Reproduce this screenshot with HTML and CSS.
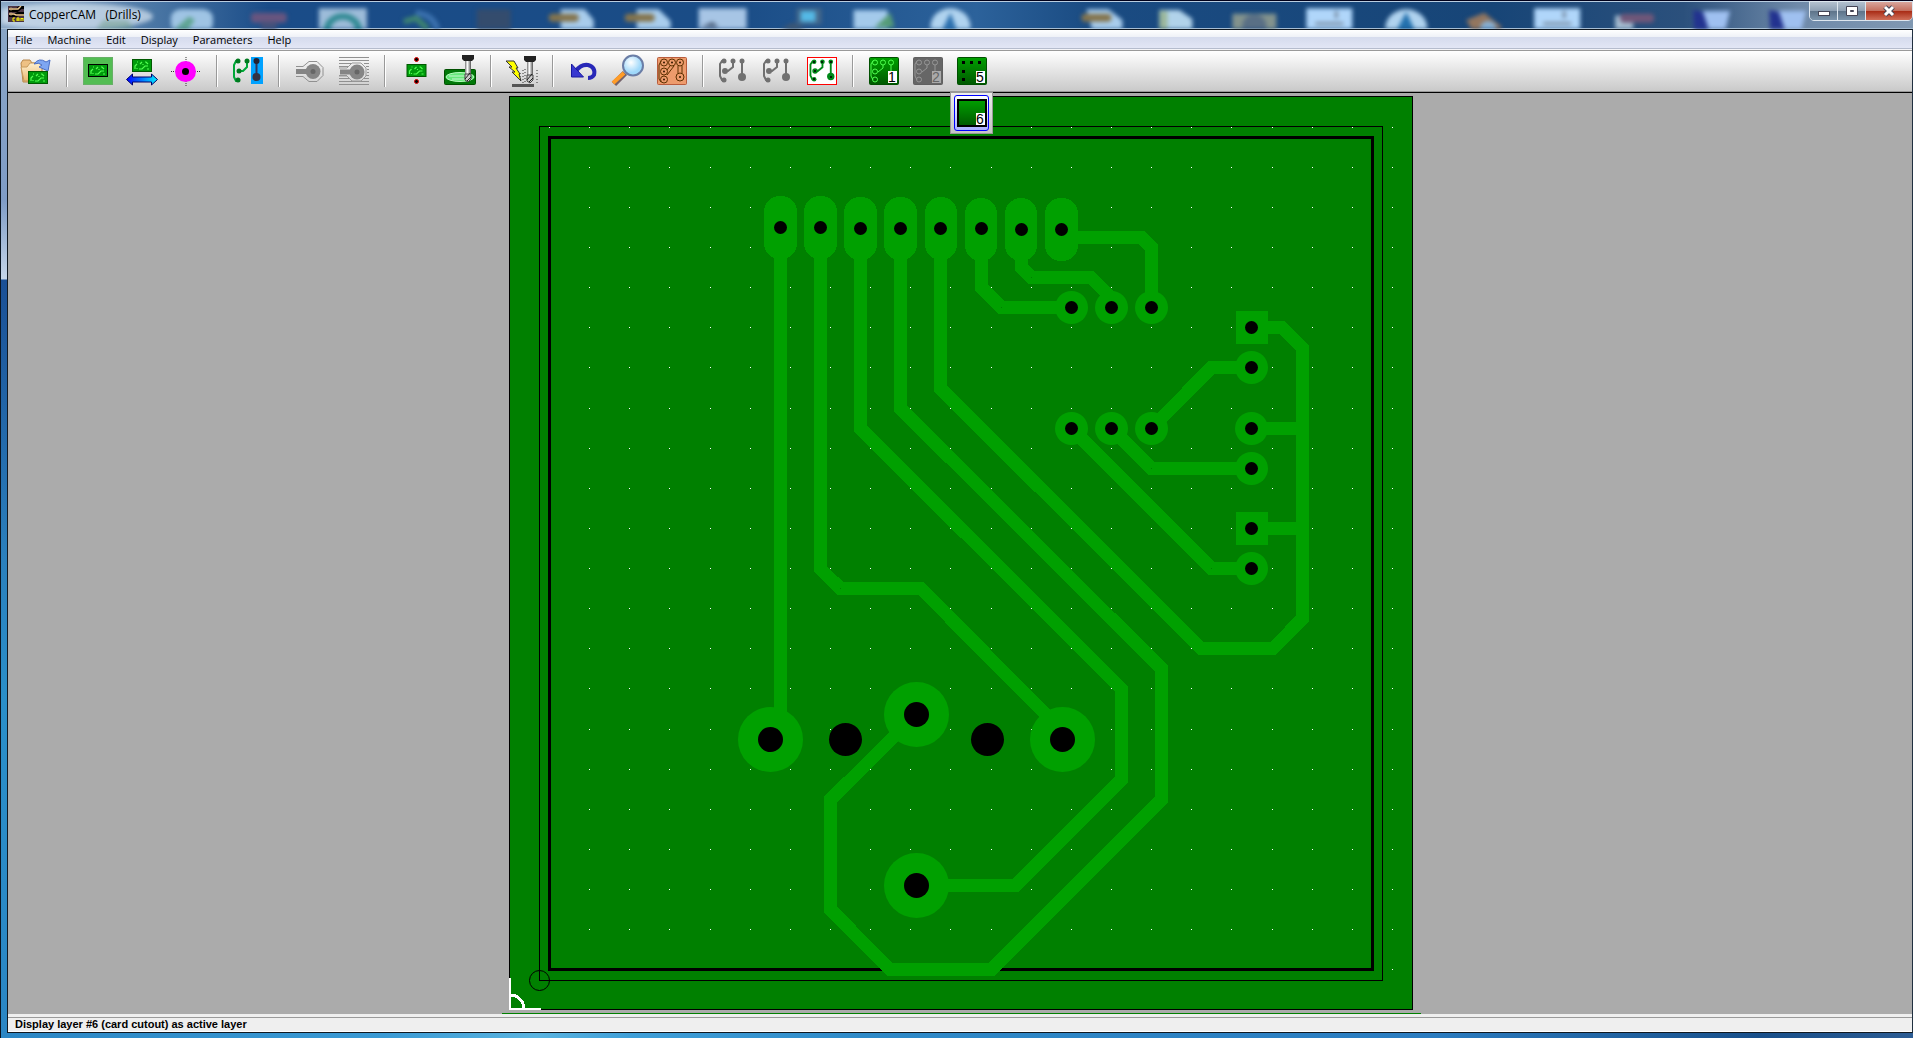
FILE: index.html
```html
<!DOCTYPE html>
<html lang="en">
<head>
    <meta charset="UTF-8">
    <meta name="viewport" content="width=device-width, initial-scale=1.0">
    <title>CopperCAM (Drills)</title>
    <link rel="stylesheet" href="styles.css">
</head>
<body>

    <!-- Shared shapes -->
    <svg class="defs" width="0" height="0" aria-hidden="true">
        <defs>
            <linearGradient id="layerGreen" x1="0" y1="0" x2="0" y2="1">
                <stop offset="0" stop-color="#00a000"/><stop offset="1" stop-color="#005800"/>
            </linearGradient>
            <linearGradient id="arrowBlue"><stop offset="0" stop-color="#0000ff"/><stop offset="1" stop-color="#00f0ff"/></linearGradient>
            <linearGradient id="folder" x1="0" y1="0" x2="0" y2="1">
                <stop offset="0" stop-color="#fff0cf"/><stop offset="1" stop-color="#eab871"/>
            </linearGradient>
            <linearGradient id="steel"><stop offset="0" stop-color="#777"/><stop offset=".4" stop-color="#fff"/><stop offset="1" stop-color="#555"/></linearGradient>
            <radialGradient id="lens" cx=".4" cy=".35"><stop offset="0" stop-color="#fff"/><stop offset="1" stop-color="#9fd8fa"/></radialGradient>
            <symbol id="card" viewBox="0 0 20 13">
                <rect x=".5" y=".5" width="19" height="12" fill="#009a0c" stroke="#005a00"/>
                <path d="M3 10V7l2-2M5 3h1M7 10h3l3-3h3M8 5l2-2M13 3h1l2 2M15 10h2M5 10v-1M11 6v-1" fill="none" stroke="#50ff50" stroke-width="1.2"/>
            </symbol>
            <symbol id="tracks" viewBox="0 0 27 26">
                <path d="M5 3H3L1 6v12l2 4h2M14 3v6l-5 4H6M23 3v16" fill="none" stroke="currentColor" stroke-width="2"/>
                <g fill="currentColor">
                    <circle cx="5" cy="3" r="2.5"/><circle cx="14" cy="3" r="2.5"/><circle cx="23" cy="3" r="2.5"/>
                    <circle cx="6" cy="13" r="3"/><circle cx="5" cy="22" r="2.5"/><circle cx="23" cy="19" r="4"/>
                </g>
            </symbol>
            <symbol id="rings" viewBox="0 0 27 26">
                <path d="M3 3L1 6v12l2 4M13 7v3l-5 4M21 7v9" fill="none" stroke="currentColor"/>
                <g fill="none" stroke="currentColor">
                    <circle cx="5" cy="4.500" r="2.500"/><circle cx="13" cy="4.500" r="2.500"/><circle cx="21" cy="4.500" r="2.500"/>
                    <circle cx="5" cy="13.500" r="2.500"/><circle cx="5" cy="21.500" r="2.500"/>
                </g>
            </symbol>
            <symbol id="mill" viewBox="0 0 12 30">
                <path d="M0 0h12v4l-2 2H2L0 4z" fill="#222"/>
                <path d="M3 6h6v13H3z" fill="url(#steel)"/>
                <path d="M3 19h6v5l-3 3-3-2z" fill="#ccc" stroke="#444"/><path d="M3 24l5-6M5 26l4-4" stroke="#222"/>
            </symbol>
        </defs>
    </svg>

    <div class="window">

        <header class="titlebar">
            <!-- desktop icons seen through the glass -->
            <svg class="glass" viewBox="0 0 1913 30" preserveAspectRatio="none" aria-hidden="true">
                <ellipse cx="70" cy="16" rx="82" ry="15" fill="#dce8f3" opacity=".7"/>
                <path d="M95 30l8-10h24l6 10z" fill="#6c9c84" opacity=".5"/>
                <rect x="170" y="8" width="42" height="26" rx="10" fill="#9fc4e4"/><path d="M174 30l14-14 6 4-8 12z" fill="#5fa592"/>
                <rect x="250" y="12" width="36" height="11" rx="4" fill="#68557f"/><rect x="260" y="22" width="16" height="10" fill="#44517a"/>
                <rect x="318" y="7" width="48" height="26" fill="#9dbcd9"/><path d="M326 32a16 16 0 0 1 32 0" fill="none" stroke="#318a94" stroke-width="7"/>
                <path d="M403 22l12-4 12 12" fill="none" stroke="#3f8570" stroke-width="6"/><path d="M415 12q18 2 22 20" fill="none" stroke="#3c72af" stroke-width="6"/>
                <rect x="476" y="8" width="34" height="24" fill="#344c6d"/>
                <path d="M560 8h24l9 12v12h-33z" fill="#a9cdec"/><rect x="548" y="13" width="30" height="9" rx="4" fill="#84744d"/>
                <path d="M636 8h22l12 13v11h-34z" fill="#a9cdec"/><rect x="624" y="13" width="30" height="9" rx="4" fill="#84744d"/>
                <rect x="698" y="7" width="48" height="25" fill="#a7c5e5"/><path d="M700 28l12-6 6 6z" fill="#4a5e7a"/>
                <rect x="796" y="7" width="25" height="18" fill="#456789"/><rect x="800" y="10" width="15" height="12" fill="#54b9e6"/><path d="M780 30l12-7 14 7z" fill="#3e5671"/>
                <rect x="853" y="9" width="34" height="22" fill="#a4caeb"/><path d="M874 28l16-16 4 16z" fill="#559b77"/>
                <circle cx="950" cy="27" r="20" fill="#b0d3ef"/><path d="M942 30l8-18 6 18z" fill="#2c70ae"/>
                <path d="M1086 8h22l14 12v12h-30z" fill="#a9cdec"/><rect x="1081" y="13" width="30" height="9" rx="4" fill="#84744d"/>
                <path d="M1159 9h20l13 10v14h-33z" fill="#b1d3ea"/><rect x="1159" y="10" width="8" height="20" fill="#9bb79a"/>
                <rect x="1232" y="13" width="44" height="20" fill="#83938d"/><circle cx="1254" cy="26" r="12" fill="#596f85"/>
                <rect x="1306" y="7" width="46" height="25" fill="#b0d6fa"/><path d="M1315 24h28M1336 10v8" stroke="#75899f" stroke-width="3"/>
                <circle cx="1406" cy="29" r="21" fill="#b0d3ef"/><path d="M1397 30l9-19 8 19z" fill="#2270ad"/>
                <path d="M1466 20l18-8 18 16-10 8h-18z" fill="#93765f"/><circle cx="1488" cy="29" r="8" fill="#87b0d4"/>
                <rect x="1534" y="7" width="46" height="25" fill="#b0d6fa"/><path d="M1543 24h28M1564 10v8" stroke="#75899f" stroke-width="3"/>
                <rect x="1615" y="15" width="18" height="18" fill="#a7bfd3"/><rect x="1620" y="13" width="34" height="10" rx="4" fill="#705779"/>
                <path d="M1702 10h28l-5 22h-20z" fill="#9fc0f0"/><path d="M1693 9l10 2 6 21h-15z" fill="#22328f"/>
                <path d="M1778 10h28l-5 22h-20z" fill="#9fc0f0"/><path d="M1769 9l10 2 6 21h-15z" fill="#22328f"/>
            </svg>
            <svg class="app-icon" viewBox="0 0 16 16" aria-hidden="true">
                <rect width="16" height="16" fill="#4c3544"/>
                <path d="M1 4h8l4-3h3M1 9h7l2-1h6" fill="none" stroke="#000" stroke-width="4"/>
                <path d="M1 3h9l3-3M1 8h5l2 1h8" fill="none" stroke="#f0c890" stroke-width="1.4"/>
                <circle cx="3" cy="3" r="1" stroke="#f0c890"/><circle cx="3" cy="8" r="1" stroke="#f0c890"/>
                <path d="M7 12H5v3h2M9 15v-3h2v3M9 14h2M13 15v-3l1 1 1-1v3" fill="none" stroke="#ff0"/>
            </svg>
            <h1>CopperCAM&nbsp;&nbsp; (Drills)</h1>
            <div class="controls">
                <button aria-label="Minimize"><svg viewBox="0 0 14 12"><rect x="1.500" y="6.500" width="11" height="4" fill="#fff" stroke="#445"/></svg></button>
                <button aria-label="Maximize"><svg viewBox="0 0 14 12"><path d="M1.500 1.500h11v9h-11zM5.500 5.500v1h3v-1z" fill="#fff" fill-rule="evenodd" stroke="#445"/></svg></button>
                <button class="close" aria-label="Close"><svg viewBox="0 0 14 12"><path d="M3 2l8 8M11 2l-8 8" stroke="#445" stroke-width="5"/><path d="M3 2l8 8M11 2l-8 8" stroke="#fff" stroke-width="3"/></svg></button>
            </div>
        </header>

        <div class="client">
            <nav class="menubar">
                <a href="#file">File</a>
                <a href="#machine">Machine</a>
                <a href="#edit">Edit</a>
                <a href="#display">Display</a>
                <a href="#parameters">Parameters</a>
                <a href="#help">Help</a>
            </nav>

            <div class="toolbar">
                <button aria-label="Open"><svg viewBox="0 0 40 36">
                    <path d="M5 10l2-3h7l2 3h10v19H7z" fill="#eec184" stroke="#b8874a"/>
                    <path d="M8 28L5 14h6l3-4h13l-3 18z" fill="url(#folder)" stroke="#c79a5c"/>
                    <path d="M18 11q5-7 12-2l4-2-2 11-9-4 3-2q-3-3-8-1z" fill="#7ea6f2" stroke="#4a6ec4"/>
                    <use href="#card" x="12" y="18" width="20" height="13"/>
                </svg></button>
                <span class="sep"></span>
                <button aria-label="Card outline"><svg viewBox="0 0 40 36">
                    <rect x="5" y="4" width="30" height="28" fill="#53bd53"/><rect x="5.500" y="4.500" width="29" height="27" fill="none" stroke="#66b066"/>
                    <use href="#card" x="10" y="11" width="20" height="13"/><rect x="10.500" y="11.500" width="19" height="12" fill="none" stroke="#000"/>
                </svg></button>
                <button aria-label="Card position"><svg viewBox="0 0 40 36">
                    <use href="#card" x="10" y="6" width="20" height="13"/>
                    <path d="M4.500 26.500l6-5.500v3h19v-3l6 5.500-6 5.500v-3h-19v3z" fill="url(#arrowBlue)" stroke="#00006a"/>
                </svg></button>
                <button aria-label="Drill origin"><svg viewBox="0 0 40 36">
                    <path d="M20 4v29M5 18.500h30" stroke="#333" stroke-dasharray="1 1"/>
                    <circle cx="19.500" cy="18.500" r="10.500" fill="#f0f"/><circle cx="19.500" cy="18.500" r="3.500"/>
                </svg></button>
                <span class="sep"></span>
                <button aria-label="Edit tracks"><svg viewBox="0 0 40 36">
                    <rect x="23" y="4" width="12" height="27" fill="#00a2ff"/>
                    <path d="M10 8H8l-2 4v12l2 4h2M19 8v6l-4 4h-4" fill="none" stroke="#00a838" stroke-width="2"/>
                    <g fill="#007a20"><circle cx="10" cy="8" r="2.500"/><circle cx="19" cy="8" r="2.500"/><circle cx="11" cy="18" r="2.500"/><circle cx="10" cy="27" r="2.500"/></g>
                    <path d="M28.500 8v16" stroke="#335" stroke-width="2"/><circle cx="28.500" cy="8" r="3" fill="#223"/><circle cx="28.500" cy="24" r="4" fill="#334"/>
                </svg></button>
                <span class="sep"></span>
                <button aria-label="Engraving contours"><svg viewBox="0 0 40 36">
                    <circle cx="23" cy="18.500" r="7.500" fill="#858585"/><path d="M6 18.500h14" stroke="#858585" stroke-width="5"/><circle cx="23" cy="18.500" r="2.500" fill="#666"/>
                    <path d="M6 13.500h7l6-5h8l6 6v8l-6 6h-8l-6-5H6" fill="none" stroke="#909090"/>
                </svg></button>
                <button aria-label="Hatching"><svg viewBox="0 0 40 36">
                    <path d="M5 4.500h30M5 7.500h30M5 10.500h12M30 10.500h5M5 13.500h9M32 13.500h3M33 16.500h2M33 19.500h2M5 22.500h8M32 22.500h3M5 25.500h11M30 25.500h5M5 28.500h30M5 31.500h30" stroke="#909090"/>
                    <circle cx="23" cy="19" r="7.500" fill="#858585"/><path d="M6 19h14" stroke="#858585" stroke-width="5"/><circle cx="23" cy="19" r="2.500" fill="#666"/>
                    <path d="M5 15h8l5-5h9l5 5v8l-5 5h-9l-5-5H5" fill="none" stroke="#999"/>
                </svg></button>
                <span class="sep"></span>
                <button aria-label="Alignment drills"><svg viewBox="0 0 40 36">
                    <use href="#card" x="10" y="11" width="21" height="13"/>
                    <circle cx="20.500" cy="6.500" r="2" stroke="#e00000"/><circle cx="20.500" cy="28.500" r="2" stroke="#e00000"/>
                </svg></button>
                <button aria-label="Surface milling"><svg viewBox="0 0 40 36">
                    <rect x="4.500" y="16.500" width="31" height="15" rx="1" fill="#007808" stroke="#005000"/>
                    <ellipse cx="20" cy="24" rx="14" ry="4.500" fill="#65e87a" stroke="#b8ffc0"/><path d="M9 23h20M12 26h17" stroke="#c8f5d0"/>
                    <use href="#mill" x="22" y="2" width="12" height="30"/>
                </svg></button>
                <span class="sep"></span>
                <button aria-label="Run milling"><svg viewBox="0 0 40 36">
                    <path d="M10 32.500h22" stroke="#555" stroke-width="3"/>
                    <path d="M4 8h8l4 7h-2l4 6h-1l2 7-9-9h3l-6-5h3z" fill="#ff0" stroke="#333"/>
                    <use href="#mill" x="22" y="3" width="12" height="30"/>
                    <path d="M21 17v14M35 17v14M18 20v8M23 16v14" stroke="#333" stroke-dasharray="1 2"/>
                </svg></button>
                <span class="sep"></span>
                <button aria-label="Undo"><svg viewBox="0 0 40 36">
                    <path d="M12 18q5-7 12-6 8 2 6 10-2 3-6 3" fill="none" stroke="#2828b8" stroke-width="4"/><path d="M7.500 11v13h12z" fill="#3838d0" stroke="#1818a0"/>
                </svg></button>
                <button aria-label="Zoom"><svg viewBox="0 0 40 36">
                    <path d="M17 20L6 31" stroke="#75626a" stroke-width="6"/><path d="M16 20L5 30" stroke="#ff9c28" stroke-width="4"/>
                    <circle cx="25" cy="12.500" r="10" fill="url(#lens)" stroke="#6a7da6" stroke-width="2"/>
                </svg></button>
                <button aria-label="Copper view"><svg viewBox="0 0 40 36">
                    <rect x="5.500" y="4.500" width="29" height="27" rx="1" fill="#ed9b6c" stroke="#b85c3c"/>
                    <g fill="none" stroke="#5c3000"><circle cx="12" cy="9.500" r="3.500"/><circle cx="20" cy="9.500" r="3.500"/><circle cx="28" cy="9.500" r="3.500"/><circle cx="12" cy="18.500" r="3.500"/><circle cx="12" cy="26.500" r="3.500"/><circle cx="28" cy="24" r="4"/>
                    <path d="M9 8l-2 4v14l2 3M18 13l-3 4M22 13l-7 9M26 13v7M30 13v7"/></g>
                    <g fill="#331800"><circle cx="12" cy="9.500" r="1"/><circle cx="20" cy="9.500" r="1"/><circle cx="28" cy="9.500" r="1"/><circle cx="12" cy="18.500" r="1"/><circle cx="12" cy="26.500" r="1"/><circle cx="28" cy="24" r="1"/></g>
                </svg></button>
                <span class="sep"></span>
                <button class="off" aria-label="Pads mode"><svg viewBox="0 0 40 36"><use href="#tracks" x="5" y="5" width="27" height="26"/></svg></button>
                <button class="off" aria-label="Tracks mode"><svg viewBox="0 0 40 36"><use href="#tracks" x="5" y="5" width="27" height="26"/></svg></button>
                <button class="on" aria-label="Card mode"><svg viewBox="0 0 40 36">
                    <rect x="5.500" y="4.500" width="29" height="27" fill="#fff" stroke="#f00"/>
                    <use href="#tracks" x="7" y="6" width="26" height="24"/>
                    <g><circle cx="12" cy="9" r="1"/><circle cx="20" cy="9" r="1"/><circle cx="29" cy="9" r="1"/><circle cx="13" cy="18" r="1"/><circle cx="12" cy="26" r="1"/><circle cx="29" cy="24" r="1"/></g>
                </svg></button>
                <span class="sep"></span>
                <button class="layer" aria-label="Layer 1"><svg viewBox="0 0 40 36">
                    <rect x="5.500" y="4.500" width="29" height="27" rx="1" fill="url(#layerGreen)" stroke="#005000"/>
                    <use href="#rings" x="6" y="5" width="27" height="26"/>
                    <rect x="24" y="18" width="9" height="12" fill="#fff"/><text x="28" y="29">1</text>
                </svg></button>
                <button class="layer disabled" aria-label="Layer 2"><svg viewBox="0 0 40 36">
                    <rect x="5.500" y="4.500" width="29" height="27" rx="1" fill="#666" stroke="#606060"/>
                    <use href="#rings" x="6" y="5" width="27" height="26"/>
                    <rect x="24" y="18" width="9" height="12" fill="#aaa"/><text x="28" y="29">2</text>
                </svg></button>
                <div class="layer-group">
                    <button class="layer" aria-label="Layer 5"><svg viewBox="0 0 40 36">
                        <rect x="5.500" y="4.500" width="29" height="27" rx="1" fill="url(#layerGreen)" stroke="#005000"/>
                        <path d="M10 9.500h3M18 9.500h3M26 9.500h3M10 18.500h3M10 26.500h3" stroke="#000" stroke-width="3"/>
                        <rect x="24" y="18" width="9" height="12" fill="#fff"/><text x="28" y="29">5</text>
                    </svg></button>
                    <button class="layer popup" aria-label="Layer 6"><svg viewBox="0 0 40 36">
                        <rect x="6" y="5" width="28" height="26" fill="url(#layerGreen)" stroke="#000" stroke-width="2"/>
                        <rect x="24" y="18" width="9" height="12" fill="#fff"/><text x="28" y="29">6</text>
                    </svg></button>
                </div>
            </div>

            <main class="workspace">
                <svg class="board" viewBox="499 93 922 921" role="img" aria-label="Circuit card">
                    <path d="M502 1013.500h919" stroke="#008000"/>
                    <rect x="509.500" y="96.500" width="903" height="913" fill="#008000" stroke="#000"/>
                    <g id="grid" fill="#fff"></g>
                    <rect x="539.500" y="126.500" width="843" height="854" fill="none" stroke="#000"/>
                    <rect x="549.500" y="137.500" width="823" height="832" fill="none" stroke="#000" stroke-width="3"/>
                    <circle cx="539.500" cy="980.500" r="10" fill="none" stroke="#000"/>
                    <path d="M510 978v31h31" fill="none" stroke="#fff" stroke-width="2"/>
                    <path d="M510 995a14 14 0 0 1 14 14" fill="none" stroke="#fff" stroke-width="3"/>

                    <g class="track">
                        <path d="M780.500 228V730"/>
                        <path d="M820.500 228V569l20 19.500H921L1062 731"/>
                        <path d="M860.500 228V428.500L1121.500 689V779.500L1015.500 885.500H916"/>
                        <path d="M900.500 228V408.500L1161.500 668.500V799.500L991.500 969.500H890L830.500 909.500V799.500L916.500 714.500"/>
                        <path d="M940.500 228V388.500L1201 648.500H1273L1302.500 618.500V348L1282 327.500H1251"/>
                        <path d="M981.500 228V287.500l20 20H1071"/>
                        <path d="M1021.500 228V267.500l10 10H1091l20.500 20.500V307"/>
                        <path d="M1061.500 237.500H1141.500l10 10V307"/>
                        <path d="M1251 367.500H1211.500L1151.500 428"/>
                        <path d="M1251 468.500H1151.500L1111.500 428.500"/>
                        <path d="M1251 568.500H1211.500L1071.500 428.500"/>
                        <path d="M1251 428.500h50M1251 528.500h50"/>
                    </g>

                    <g class="pad">
                        <rect x="764" y="196" width="33" height="63" rx="16"/>
                        <rect x="804" y="196" width="33" height="63" rx="16"/>
                        <rect x="844" y="197" width="33" height="63" rx="16"/>
                        <rect x="884" y="197" width="33" height="63" rx="16"/>
                        <rect x="925" y="197" width="32" height="63" rx="16"/>
                        <rect x="965" y="198" width="32" height="63" rx="16"/>
                        <rect x="1005" y="198" width="32" height="63" rx="16"/>
                        <rect x="1045" y="198" width="33" height="63" rx="16"/>
                        <rect x="1236" y="311" width="32" height="33"/>
                        <rect x="1236" y="512" width="32" height="33"/>
                        <circle cx="1071.500" cy="307.500" r="16.500"/><circle cx="1111.500" cy="307.500" r="16.500"/><circle cx="1151.500" cy="307.500" r="16.500"/>
                        <circle cx="1071.500" cy="428.500" r="16.500"/><circle cx="1111.500" cy="428.500" r="16.500"/><circle cx="1151.500" cy="428.500" r="16.500"/>
                        <circle cx="1251.500" cy="367.500" r="16.500"/><circle cx="1251.500" cy="428.500" r="16.500"/>
                        <circle cx="1251.500" cy="468.500" r="16.500"/><circle cx="1251.500" cy="568.500" r="16.500"/>
                        <circle cx="770.500" cy="739.500" r="32.500"/><circle cx="916.500" cy="714.500" r="32.500"/>
                        <circle cx="1062.500" cy="739.500" r="32.500"/><circle cx="916.500" cy="885.500" r="32.500"/>
                    </g>

                    <g class="hole">
                        <circle cx="780.500" cy="227.500" r="6.500"/><circle cx="820.500" cy="227.500" r="6.500"/>
                        <circle cx="860.500" cy="228.500" r="6.500"/><circle cx="900.500" cy="228.500" r="6.500"/>
                        <circle cx="940.500" cy="228.500" r="6.500"/><circle cx="981.500" cy="228.500" r="6.500"/>
                        <circle cx="1021.500" cy="229.500" r="6.500"/><circle cx="1061.500" cy="229.500" r="6.500"/>
                        <circle cx="1071.500" cy="307.500" r="6.500"/><circle cx="1111.500" cy="307.500" r="6.500"/><circle cx="1151.500" cy="307.500" r="6.500"/>
                        <circle cx="1071.500" cy="428.500" r="6.500"/><circle cx="1111.500" cy="428.500" r="6.500"/><circle cx="1151.500" cy="428.500" r="6.500"/>
                        <circle cx="1251.500" cy="327.500" r="6.500"/><circle cx="1251.500" cy="367.500" r="6.500"/><circle cx="1251.500" cy="428.500" r="6.500"/>
                        <circle cx="1251.500" cy="468.500" r="6.500"/><circle cx="1251.500" cy="528.500" r="6.500"/><circle cx="1251.500" cy="568.500" r="6.500"/>
                        <circle cx="770.500" cy="739.500" r="12.500"/><circle cx="916.500" cy="714.500" r="12.500"/>
                        <circle cx="1062.500" cy="739.500" r="12.500"/><circle cx="916.500" cy="885.500" r="12.500"/>
                        <circle cx="845.500" cy="739.500" r="16.500"/><circle cx="987.500" cy="739.500" r="16.500"/>
                    </g>
                </svg>
            </main>

            <footer class="status">Display layer #6 (card cutout) as active layer</footer>
        </div>
    </div>

    <script>
        // Grid dots of the card, 22 x 22
        const grid = document.getElementById('grid');
        const pitch = 40.14;
        for (let row = 0; row < 22; row++) {
            for (let col = 0; col < 22; col++) {
                const dot = document.createElementNS('http://www.w3.org/2000/svg', 'rect');
                dot.setAttribute('x', Math.round(549 + col * pitch));
                dot.setAttribute('y', Math.round(126.52 + row * pitch));
                dot.setAttribute('width', 1);
                dot.setAttribute('height', 1);
                grid.appendChild(dot);
            }
        }
    </script>

</body>
</html>
```
FILE: styles.css
```css
* {
    box-sizing: border-box;
}

body, html {
    margin: 0;
    padding: 0;
    height: 100%;
    overflow: hidden;
    font-family: "Open Sans", "Noto Sans", sans-serif;
    font-size: 12px;
    color: #000;
}

.defs {
    position: absolute;
}

button {
    margin: 0;
    padding: 0;
    border: none;
    background: none;
    font: inherit;
}

/* Window frame */
.window {
    display: flex;
    flex-direction: column;
    height: 100vh;
    padding: 0 0 5px 6px;
    border-left: 1px solid #0a1420;
    background:
        linear-gradient(90deg, #2b86c4, #3a9ad4 20%, #5ab4e0 28%, #3f9fd8 33%, #2f8ac8 45%, #2b7cc0 75%, #184f8a 92%, #2c5c93) bottom / 100% 5px no-repeat,
        linear-gradient(#8ba7c6, #7f9cc6 200px, #c5d5e8 279px, #1a4f95 280px, #2b80bd 560px, #2b8fc9 700px, #2b86c4);
}

.titlebar {
    position: relative;
    display: flex;
    align-items: center;
    height: 29px;
    flex: none;
    margin-left: -6px;
    padding: 0 0 2px 7px;
    overflow: hidden;
    border-top: 1px solid #00001a;
    box-shadow: inset 0 1px #b9cde0, inset 0 -1px #a6bdd3;
    background: linear-gradient(90deg, #8ba7c6, #4a76a4 8%, #1a4c88 14%, #1a4c86 38%, #2c629b 51%, #1a4b82 57%, #174577 78%, #2b507c 88%, #6f8aa9 94%, #8098b2);
}

.glass {
    position: absolute;
    top: 1px;
    left: 0;
    width: 100%;
    height: 27px;
    filter: blur(2px);
}

.app-icon {
    position: relative;
    width: 16px;
    height: 16px;
}

.titlebar h1 {
    position: relative;
    flex: 1;
    margin: 0 0 0 5px;
    font-size: 12px;
    font-weight: normal;
}

.controls {
    position: relative;
    display: flex;
    align-self: flex-start;
    height: 20px;
    border: 1px solid #dde6ee;
    border-radius: 0 0 5px 5px;
    overflow: hidden;
}

.controls button {
    display: flex;
    align-items: center;
    justify-content: center;
    width: 28px;
    border-right: 1px solid #dde6ee;
    background: linear-gradient(#b3c1cf, #8ea0b3 48%, #5d7389 50%, #7b94ab);
}

.controls svg {
    width: 14px;
    height: 12px;
}

.controls .close {
    width: 46px;
    border: none;
    background: linear-gradient(#d9a69c, #c4705f 48%, #a82a14 50%, #d0705a);
}

.client {
    display: flex;
    flex: 1;
    flex-direction: column;
    min-height: 0;
    border: 1px solid #101820;
    border-right-color: #203040;
}

/* Menu */
.menubar {
    display: flex;
    align-items: center;
    gap: 15px;
    height: 20px;
    flex: none;
    padding: 0 7px 1px;
    background: linear-gradient(#fff, #eef1f7 7px, #d5dbed 7px, #e2e6f5 18px, #b5bccd 18px, #b5bccd 19px, #f4f4f8 19px);
    font-size: 11px;
}

.menubar a {
    color: #000;
    text-decoration: none;
}

/* Toolbar */
.toolbar {
    display: flex;
    flex: none;
    height: 43px;
    padding-left: 6px;
    border-top: 1px solid #9a9a9a;
    border-bottom: 1px solid #000;
    box-shadow: inset 0 -1px #999;
    background: linear-gradient(#fff, #c8c8c8);
}

.toolbar button {
    display: flex;
    align-items: center;
    justify-content: center;
    width: 44px;
    height: 40px;
}

.toolbar svg {
    width: 40px;
    height: 36px;
}

.sep {
    width: 2px;
    height: 32px;
    margin: 4px 8px;
    border-left: 1px solid #999;
    border-right: 1px solid #fff;
}

.toolbar .off {
    color: #707070;
}

.toolbar .on {
    color: #008818;
}

.layer {
    color: #50ff50;
}

.layer text {
    fill: #000;
    font-family: "Liberation Sans", Arial, sans-serif;
    font-size: 14px;
    text-anchor: middle;
}

.toolbar .disabled {
    color: #969696;
}

.disabled text {
    fill: #666;
}

.layer-group {
    position: relative;
}

/* drops over the workspace under its parent layer */
.toolbar .popup {
    position: absolute;
    top: 41px;
    left: 0;
    width: 43px;
    height: 42px;
    border: 1px solid #999;
    background: linear-gradient(#eee, #c4c4c4);
}

.popup::before {
    content: "";
    position: absolute;
    inset: 2px 3px;
    border: 1px solid #0000ff;
    border-radius: 3px;
    background: linear-gradient(#fff, #aab0ff);
}

.popup svg {
    position: relative;
}

/* Card */
.workspace {
    display: flex;
    flex: 1;
    justify-content: center;
    min-height: 0;
    background-color: #ababab;
}

.board {
    height: 100%;
}

.board rect, .board path {
    shape-rendering: crispEdges;
}

.track {
    fill: none;
    stroke: #00a000;
    stroke-width: 13;
}

.pad {
    fill: #00a000;
}

.hole {
    fill: #000;
}

.status {
    flex: none;
    height: 18px;
    padding: 0 7px;
    border-top: 3px solid #efefef;
    box-shadow: inset 0 1px #9a9a9a, inset 0 -1px #fff;
    background-color: #efefef;
    font: bold 11px/14px "Liberation Sans", Arial, sans-serif;
}
```
